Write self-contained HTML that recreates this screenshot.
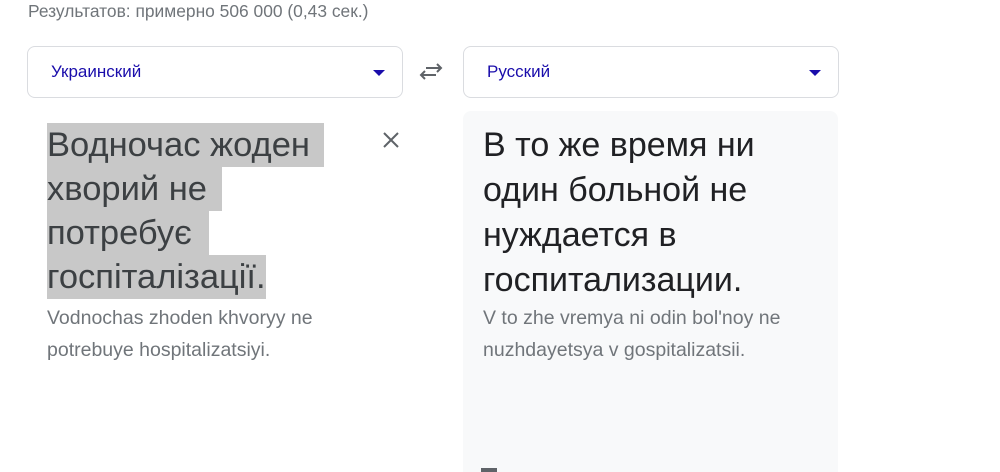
<!DOCTYPE html>
<html><head><meta charset="utf-8"><style>
*{margin:0;padding:0;box-sizing:border-box}
html,body{width:1000px;height:472px;overflow:hidden}
body{background:#fff;font-family:"Liberation Sans",Arial,sans-serif;position:relative}
.stats{position:absolute;left:28px;top:1px;font-size:17.4px;color:#70757a}
.sel{position:absolute;top:46px;height:52px;border:1px solid #dadce0;border-radius:8px;background:#fff}
.sel span{position:absolute;left:23px;top:15px;font-size:17px;color:#1a0dab}
.tri{position:absolute;right:17px;top:23px;width:0;height:0;border-left:6px solid transparent;border-right:6px solid transparent;border-top:6px solid #1a0dab}
.src{position:absolute;left:47px;top:123px;font-size:34.5px;line-height:44px;color:#3c4043;white-space:nowrap}
.src div{background:#c8c8c8;display:inline-block;height:44px}
.rom{position:absolute;font-size:19.5px;line-height:32px;color:#70757a;white-space:nowrap}
.right{position:absolute;left:463px;top:111px;width:375px;height:380px;background:#f8f9fa;border-radius:8px}
.tgt{position:absolute;left:483px;top:123px;font-size:34px;line-height:45px;color:#202124;white-space:nowrap}
</style></head><body>
<div class="stats">Результатов: примерно 506 000 (0,43 сек.)</div>
<div class="sel" style="left:27px;width:376px"><span>Украинский</span><div class="tri"></div></div>
<svg style="position:absolute;left:419px;top:61px" width="24" height="22" viewBox="0 0 24 22"><path d="M2 14h15M6 10l-4 4 4 4M22 7H7M18 3l4 4-4 4" stroke="#5f6368" stroke-width="2" fill="none"/></svg>
<div class="sel" style="left:463px;width:376px"><span>Русский</span><div class="tri"></div></div>
<div class="src"><div style="width:277px">Водночас жоден</div><br><div style="width:175px">хворий не</div><br><div style="width:162px">потребує</div><br><div style="width:219px">госпіталізації.</div></div>
<svg style="position:absolute;left:382px;top:131px" width="18" height="18" viewBox="0 0 18 18"><path d="M2 2L16 16M16 2L2 16" stroke="#5f6368" stroke-width="2"/></svg>
<div class="rom" style="left:47px;top:302px">Vodnochas zhoden khvoryy ne<br>potrebuye hospitalizatsiyi.</div>
<div class="right"></div>
<div class="tgt">В то же время ни<br>один больной не<br>нуждается в<br>госпитализации.</div>
<div class="rom" style="left:483px;top:302px">V to zhe vremya ni odin bol'noy ne<br>nuzhdayetsya v gospitalizatsii.</div>
<div style="position:absolute;left:481px;top:468px;width:16px;height:4px;background:#5f6368"></div>
</body></html>
